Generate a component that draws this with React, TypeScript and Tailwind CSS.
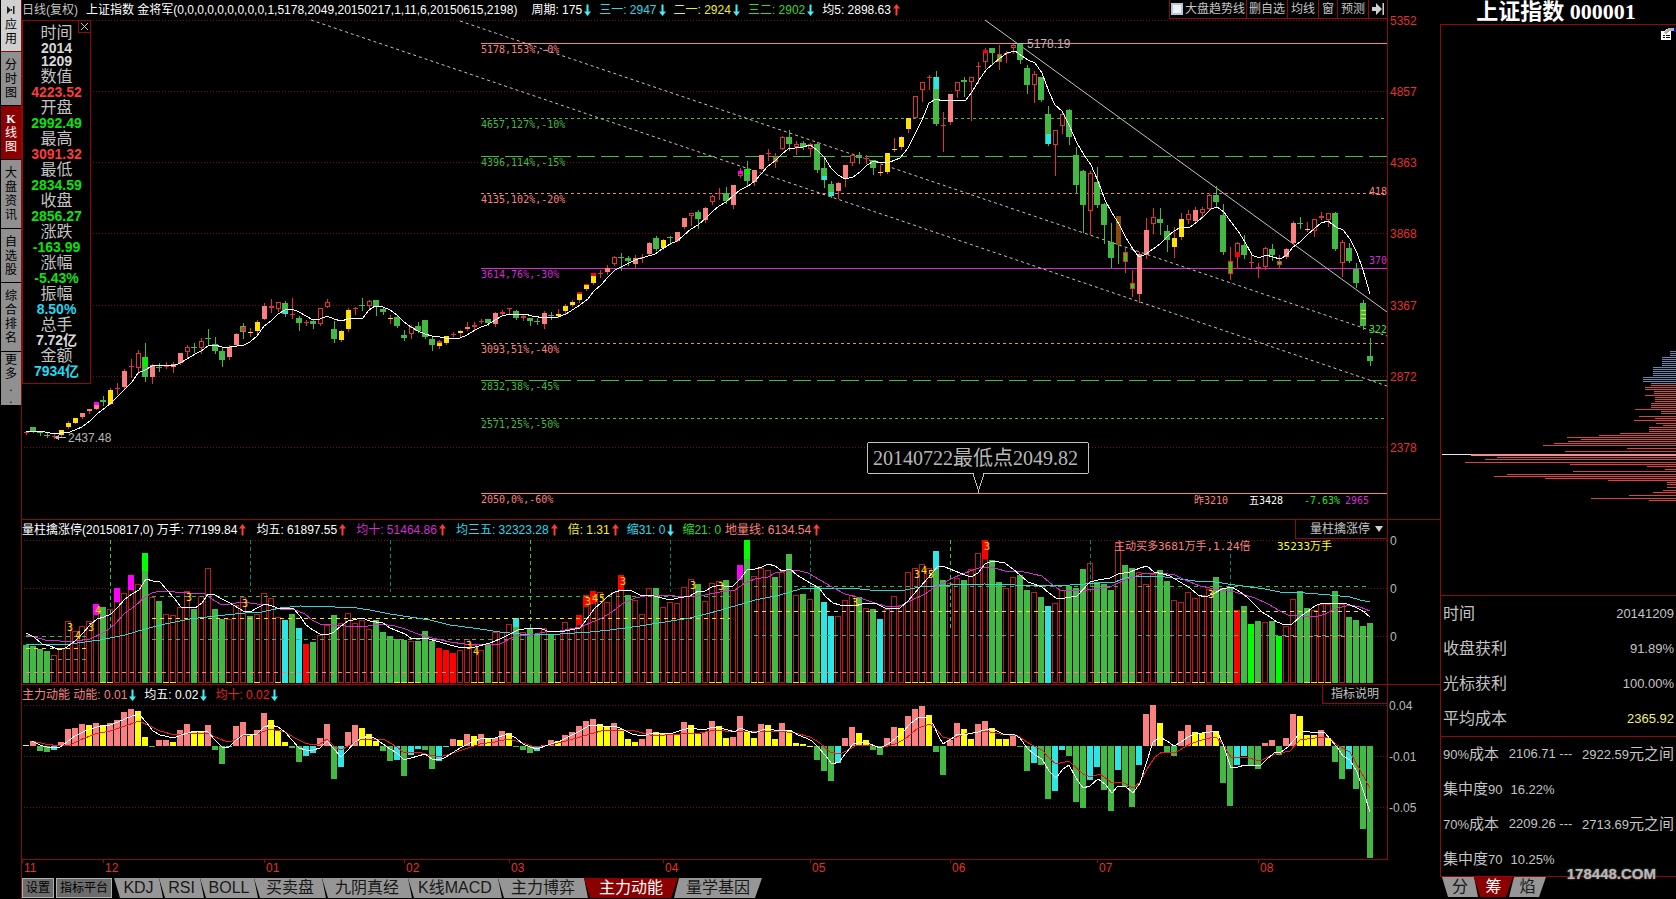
import { useState } from "react";

const RED = "#e03232";
const DARK_RED = "#8c0a0a";
const GREEN = "#42b942";
const PINK = "#fa8080";
const YELLOW = "#ffe100";
const CYAN = "#2ce6e6";
const MAGENTA = "#d22cd2";
const LIME = "#00f000";

/** First bar sits at x = 26, then one bar every 7 units. */
const barX = (i: number) => 26 + 7 * i;

// kind high top bottom low
const CANDLES = `
r431,432,433,434 g427,427,432,432 g431,432,433,435 g433,435,436,437 r434,436,437,438 y430,430,435,436 y421,423,427,428 y418,418,423,423
p413,413,417,418 p409,409,411,413 p402,402,409,409 g396,400,402,405 y388,390,404,404 m383,388,389,394 p369,371,387,388 m359,366,367,377
r350,353,368,373 g343,357,377,381 p364,365,377,383 g363,367,368,371 r362,366,367,368 p362,364,367,372 p353,353,363,364 r345,347,352,357
g343,347,348,352 r338,341,348,353 g329,338,339,344 g337,344,351,353 g348,351,360,366 p345,347,357,359 p333,334,345,346 g323,326,332,338
y328,332,333,336 y320,322,331,333 p303,306,319,319 r299,306,308,312 r302,302,309,311 g301,303,314,316 r298,314,315,318 g316,318,323,330
r320,322,323,325 g319,321,324,328 r308,308,324,325 r299,302,307,307 g321,329,339,342 y330,331,340,341 y308,310,329,331 r307,308,309,314
g298,305,306,310 r300,301,306,310 g300,300,306,315 g307,309,312,314 y315,318,319,323 g315,317,326,327 g330,335,338,340 r325,327,334,338
g322,326,331,332 g320,320,337,338 g337,339,345,350 y340,342,346,348 y336,336,343,344 r332,334,335,336 y330,331,333,336 p322,327,329,330
r322,325,327,329 r319,321,322,323 g319,319,323,325 p312,313,324,326 r310,312,314,314 r308,308,309,313 g310,311,318,319 r314,316,318,320
g318,318,321,325 g318,321,322,324 p311,313,324,328 g312,315,316,319 y309,314,316,317 y304,306,311,313 y300,302,305,306 y292,292,300,302
y284,284,289,290 y273,273,283,284 r270,273,274,277 p265,268,272,274 r256,257,264,265 g253,257,258,270 g256,258,261,265 p255,258,264,268
r254,257,258,262 p242,243,254,254 g236,238,249,250 y239,240,248,249 g236,237,238,244 p232,232,241,241 p218,218,227,228 r213,213,216,225
g210,212,219,228 p207,208,220,222 r195,196,202,204 r188,193,194,199 g187,193,201,203 p185,185,205,208 r168,171,176,177 g161,169,181,186
p170,170,182,185 p155,155,169,169 r149,153,154,160 l153,157,162,167 r136,137,149,149 g130,137,144,150 r141,144,147,154 g141,143,147,149
r143,144,149,156 g142,144,170,172 g157,168,180,187 g181,184,196,197 p182,183,191,198 p165,165,179,186 r153,155,163,165 g152,155,158,163
r155,158,159,163 g160,160,168,174 y165,172,173,175 y153,153,172,173 y138,149,150,151 y136,137,147,149 y118,118,129,132 r96,96,118,118
r82,82,90,101 r75,77,78,89 g71,77,124,125 r112,125,126,151 p94,94,122,124 r82,82,91,97 g77,80,82,96 r77,77,82,120
r62,66,67,83 r48,50,62,68 g48,48,53,64 l45,54,62,69 r51,53,54,62 r43,45,48,53 g43,44,60,63 g65,68,85,93
r71,74,85,102 g77,77,100,101 g106,114,144,145 r130,130,145,175 r112,114,126,133 g109,110,137,144 g147,155,185,193 g170,171,205,232
r171,173,211,234 g167,182,205,207 g203,204,225,243 g223,242,258,267 b216,216,245,263 l248,252,262,272 l270,283,289,296 p252,254,294,302
p218,230,255,258 r208,217,224,233 g208,219,223,234 g225,231,240,251 y227,238,247,257 y213,219,237,239 r210,214,220,223 p207,210,221,223
r207,209,213,216 r193,195,209,209 g186,195,202,206 g204,215,252,254 l247,261,274,279 r242,243,257,268 g235,245,255,258 r252,262,263,267
r263,267,268,277 r247,248,267,269 g244,249,255,260 l255,261,265,268 p248,249,257,258 p221,223,243,244 g217,223,224,228 y222,229,230,231
r219,219,231,236 r212,216,218,219 r213,213,220,226 g212,213,249,250 r240,242,263,276 g243,248,261,262 g263,269,283,287 g300,303,326,329
g338,356,361,365
`
  .trim()
  .split(/\s+/)
  .map((t) => ({ kind: t[0], v: t.slice(1).split(",").map(Number) }));

// bar index, top, height, colour
const CANDLE_ACCENTS: [number, number, number, string][] = [
  [10, 402, 3, "#ff00ff"], [17, 357, 9, LIME], [31, 327, 4, RED], [37, 311, 3, CYAN], [59, 341, 2, RED],
  [79, 292, 2, "#ff0000"], [80, 284, 1, "#ff0000"], [81, 273, 3, "#ff0000"], [102, 171, 3, "#ff00ff"], [103, 169, 5, LIME],
  [114, 176, 4, CYAN], [115, 192, 4, CYAN], [130, 77, 12, CYAN], [137, 50, 3, "#ff0000"], [146, 134, 10, CYAN],
  [173, 252, 5, "#ff0000"], [191, 310, 1, YELLOW], [191, 314, 1, YELLOW], [191, 318, 1, YELLOW],
];

const PRICE_MA =
  "26,431 40,431 50,433 60,433 70,432 82,427 90,421 97,414 105,408 112,402 118,396 125,389 132,382 138,373 145,370 152,366 160,365 173,366 180,363 187,359 195,354 201,351 208,346 215,345 222,347 230,347 237,346 244,345 250,342 257,336 264,326 271,321 278,314 285,310 292,309 299,312 306,316 313,320 320,319 327,316 334,319 341,321 348,319 355,318 362,319 369,310 375,306 383,307 390,310 397,315 404,322 411,327 418,331 425,334 432,336 440,337 450,339 460,338 467,335 475,330 481,327 487,325 495,320 502,316 510,314 525,314 532,316 545,318 558,317 566,314 580,305 588,299 594,291 602,284 608,277 615,270 625,265 635,260 645,257 655,254 662,249 670,244 677,241 683,236 691,229 698,225 705,219 712,212 719,206 726,202 733,196 740,190 748,186 755,181 761,174 768,166 775,161 781,155 788,149 795,148 803,147 810,145 817,150 824,157 831,168 838,175 845,179 853,177 860,172 867,165 874,161 881,163 890,162 900,158 908,148 916,132 922,120 929,103 936,99 943,101 951,100 958,100 965,101 972,92 979,80 986,70 993,64 1000,58 1007,53 1015,51 1022,56 1028,60 1035,63 1042,73 1049,92 1055,105 1062,111 1069,125 1077,143 1084,155 1091,165 1098,181 1105,200 1112,213 1119,224 1126,238 1133,249 1139,257 1146,254 1153,249 1160,244 1167,237 1174,231 1181,227 1190,227 1197,222 1204,216 1211,209 1217,207 1224,212 1231,222 1238,231 1245,242 1252,255 1259,258 1266,255 1273,257 1280,259 1287,255 1293,247 1300,242 1307,235 1314,229 1321,223 1328,221 1336,227 1343,230 1350,239 1357,253 1363,270 1370,294";

const LEVELS = [
  { y: 43, label: "5178,153%,-0%", color: PINK, dash: "" },
  { y: 118, label: "4657,127%,-10%", color: GREEN, dash: "3 3" },
  { y: 156, label: "4396,114%,-15%", color: GREEN, dash: "18 6" },
  { y: 193, label: "4135,102%,-20%", color: PINK, dash: "3 3" },
  { y: 268, label: "3614,76%,-30%", color: MAGENTA, dash: "" },
  { y: 343, label: "3093,51%,-40%", color: PINK, dash: "3 3" },
  { y: 380, label: "2832,38%,-45%", color: GREEN, dash: "18 6" },
  { y: 418, label: "2571,25%,-50%", color: GREEN, dash: "3 3" },
  { y: 493, label: "2050,0%,-60%", color: PINK, dash: "" },
];

const PRICE_AXIS: [number, string][] = [
  [20, "5352"], [91, "4857"], [162, "4363"], [233, "3868"], [305, "3367"], [376, "2872"], [447, "2378"],
];

const VOLUMES = `
g645 g646 g649 g651 r655 r648 r621 r631 r626 r621 r604 g607 r609 r588 r593 r575 r584 g553 r597 g601 r614 r615 r607 r591 g609
r596 r568 g609 g619 r619 r605 r597 g616 r614 r593 r598 r617 c620 g614 c628 R644 g642 r635 r625 g615 r623 r613 r623 r620 r629
g620 g632 g636 g639 g640 r641 g641 g631 g641 R648 R650 R653 r650 r639 r645 r650 g644 r632 r632 r624 g618 r632 g629 g634 r628
g634 r634 r622 r628 r615 r595 r591 r592 r602 r592 r575 g595 r600 r614 r588 g588 r607 r602 r603 r587 r579 g584 r601 r583 r581
g580 r590 r565 g540 r576 r568 r570 g577 r572 g554 r595 g594 r599 g586 c602 c616 r616 r600 r595 g597 r608 g609 c619 r609 r596
r605 r572 r568 r564 r568 g551 g580 r583 r578 g580 r569 r553 r540 g560 g582 r588 r577 g575 g590 r592 g597 c606 r603 r590 g586
g588 g569 r563 g582 g584 g590 r543 g565 g568 r572 r584 r574 g570 g581 r600 r602 r592 r598 r595 r589 g577 g588 g588 R610 g606
l624 g621 r622 g621 l636 r626 r599 g591 g608 r610 r604 r604 g591 r604 g617 g620 g626 g623
`
  .trim()
  .split(/\s+/)
  .map((t) => ({ kind: t[0], y: Number(t.slice(1)) }));

const VOLUME_ACCENTS: [number, number, number, string][] = [
  [10, 604, 11, "#ff00ff"], [13, 588, 14, "#ff00ff"], [15, 575, 15, "#ff00ff"], [17, 553, 18, "#00ff00"], [70, 618, 9, CYAN],
  [79, 615, 10, "#ff0000"], [80, 595, 12, "#ff0000"], [81, 591, 13, "#ff0000"], [85, 575, 15, "#ff0000"], [102, 565, 15, "#ff00ff"],
  [103, 540, 19, "#00ff00"], [130, 551, 18, CYAN], [137, 540, 19, "#ff0000"],
];

const YELLOW_FEET = [
  11, 12, 20, 21, 29, 33, 36, 53, 54, 55, 56, 64, 65, 67, 68, 75, 76, 81, 82, 83, 84, 89, 92, 93, 98, 99, 104, 105, 110, 111,
  119, 126, 127, 128, 129, 131, 132, 133, 134, 141, 142, 143, 153, 154, 157, 158, 159, 164, 165, 167, 168, 171, 172, 176, 183, 184, 185, 186,
];

const VOLUME_MARKS: [number, number, string][] = [
  [70, 627, "3"], [78, 635, "4"], [91, 627, "3"], [98, 610, "4"], [189, 597, "3"], [245, 603, "3"], [469, 645, "3"], [476, 651, "4"],
  [588, 601, "3"], [595, 598, "4"], [602, 598, "5"], [623, 581, "3"], [693, 585, "3"], [721, 586, "3"], [855, 602, "3"], [917, 574, "3"],
  [924, 570, "4"], [931, 574, "5"], [987, 546, "3"], [1211, 594, "3"],
];

const VOLUME_MA5 =
  "26,633 34,637 42,644 50,646 60,650 67,647 75,641 83,633 90,625 97,619 104,617 111,614 118,607 125,599 132,594 139,590 146,579 153,581 160,582 167,590 174,598 181,607 195,608 202,603 208,594 215,595 222,599 230,603 243,611 250,612 257,608 265,604 272,606 280,609 293,608 300,616 306,625 313,630 320,634 327,635 334,632 341,626 348,621 362,618 370,621 383,623 390,628 405,634 412,639 425,638 440,642 450,645 462,648 475,647 490,643 500,639 510,634 518,630 530,628 542,629 550,632 565,631 580,628 587,619 594,609 602,602 608,596 615,592 622,590 632,591 640,595 650,595 658,597 670,600 678,598 690,596 698,591 705,591 712,587 720,585 728,587 733,586 740,579 747,570 755,569 762,567 768,564 775,566 782,571 790,569 797,575 805,580 812,584 819,588 826,597 833,603 840,605 855,606 862,604 875,603 885,608 900,608 908,601 914,594 920,587 928,578 938,566 945,567 955,571 965,575 971,577 978,573 985,564 992,561 1005,563 1013,569 1020,575 1028,582 1042,587 1049,593 1056,598 1065,598 1077,596 1090,582 1098,580 1110,578 1118,574 1130,572 1140,568 1147,566 1154,572 1163,574 1170,576 1180,582 1190,588 1198,595 1205,597 1213,594 1222,589 1232,587 1240,592 1247,597 1255,605 1262,612 1270,617 1277,622 1285,625 1292,624 1300,617 1308,611 1315,606 1322,603 1335,603 1347,604 1355,607 1363,611 1370,617";
const VOLUME_MA10 =
  "26,635 35,637 45,640 60,641 75,641 90,639 105,632 115,624 125,613 135,606 145,597 152,593 160,591 175,592 190,593 205,594 212,599 220,604 230,604 243,602 257,604 265,604 272,606 280,609 293,609 305,614 312,620 320,624 345,626 362,627 380,624 395,626 405,629 418,634 432,638 450,642 465,644 500,644 515,636 530,635 545,632 560,631 580,627 590,623 602,618 612,612 622,604 635,598 650,595 665,595 675,596 690,597 705,595 720,592 735,590 745,583 755,579 768,577 775,573 790,570 800,571 808,573 820,580 832,587 845,594 860,598 875,603 888,607 900,606 912,600 925,594 935,587 945,582 955,577 970,571 982,567 995,568 1008,572 1020,571 1033,574 1042,576 1050,583 1060,590 1080,591 1095,589 1110,587 1120,582 1130,578 1142,574 1160,573 1175,575 1185,580 1200,586 1215,589 1235,592 1245,595 1255,598 1268,604 1280,611 1288,615 1300,616 1315,617 1325,614 1338,608 1350,605 1360,607 1370,611";
const VOLUME_MA35 =
  "26,644 45,645 70,644 100,640 125,635 145,629 165,624 190,619 215,616 245,613 262,612 280,608 300,606 335,607 350,607 370,610 390,614 410,617 430,620 450,625 480,629 500,632 520,634 560,634 590,632 610,630 640,626 665,622 690,618 710,613 735,606 755,600 780,595 800,589 820,588 850,588 870,590 905,590 920,587 950,585 985,584 1015,585 1045,586 1070,585 1100,583 1115,582 1125,578 1145,576 1165,577 1195,581 1215,582 1235,585 1265,589 1280,592 1305,593 1330,595 1350,597 1360,600 1370,602";

// x1, x2, y, colour
const VOLUME_LEVELS: [number, number, number, string][] = [
  [26, 90, 636, GREEN], [26, 90, 648, YELLOW], [50, 90, 659, GREEN],
  [152, 730, 596, GREEN], [152, 730, 618, YELLOW], [152, 730, 639, GREEN],
  [754, 1370, 586, GREEN], [754, 1370, 611, YELLOW], [754, 1370, 635, GREEN],
  [26, 1240, 672, PINK], [1285, 1370, 636, PINK],
];

const MOMENTUM = `
y745 p741 g751 g752 c750 p742 p729 p728 p724 y725 p723 y725 p723 p720 p712 p709 y711 y737 g747 p740 p740 y742 p730 p724 y731
y731 p725 g750 g764 c747 p726 p722 y735 p730 p713 y720 y730 y742 g748 g762 c756 c753 p738 p724 g779 c767 p732 p725 y728 y734
y741 g751 g761 c760 g776 c755 c749 g750 g769 c761 c747 p739 y740 p734 y736 p734 y739 p738 p731 y733 g747 g750 g753 c751 p745
p740 y741 p735 p732 p726 p721 p719 y724 y727 p723 y729 y739 y742 p739 p729 y732 y734 p734 y734 p722 y725 y734 p732 p721 y726
y738 p737 p716 y732 y738 p724 y725 y739 p723 y731 y743 y744 y747 g760 g771 g781 c763 p738 p727 y733 y740 g750 g755 p738 p727
y728 p716 p709 p706 y715 g752 g775 p740 p723 y729 y739 p724 p721 y728 y739 y739 p735 g747 g771 c763 g765 g799 c791 c750 g756
g802 g808 c780 c767 g790 g811 c770 g787 g807 c765 p714 p705 y723 g752 g756 p731 p725 y732 y733 p725 y731 g783 g806 c765 c756
g766 g769 p743 p740 g755 p738 p714 y716 y735 y735 p730 y738 g762 g779 c769 g789 g829 g858
`
  .trim()
  .split(/\s+/)
  .map((t) => ({ kind: t[0], y: Number(t.slice(1)) }));

const MOMENTUM_MA5 =
  "32,741 40,745 50,748 60,747 67,742 75,736 85,731 97,727 110,725 118,722 125,719 132,716 139,714 146,722 153,731 160,735 174,738 181,735 195,731 208,732 215,740 222,747 229,747 236,740 243,735 257,734 264,727 271,725 278,727 285,732 292,740 299,748 306,750 313,750 320,748 327,741 334,749 341,757 348,750 355,742 362,738 369,736 376,739 383,744 390,749 397,753 404,760 411,758 418,756 425,754 432,759 439,760 446,757 460,748 470,743 480,739 495,738 508,734 516,738 523,744 530,747 537,749 548,745 560,741 570,736 580,731 590,725 598,725 608,727 615,726 622,729 632,734 642,736 653,733 665,734 673,733 682,730 690,728 697,729 705,730 712,727 720,728 728,730 735,732 740,728 748,731 755,733 762,730 770,729 778,731 790,730 798,735 806,738 812,741 818,747 825,755 832,764 839,762 846,753 853,744 862,742 870,744 880,748 888,744 895,739 904,731 910,724 918,718 926,717 933,724 939,737 943,744 951,739 958,734 968,734 978,732 988,729 995,730 1003,734 1015,735 1020,738 1027,748 1035,755 1042,759 1049,771 1056,778 1063,769 1069,765 1076,778 1083,788 1090,786 1098,779 1105,784 1112,793 1118,786 1125,786 1133,793 1140,783 1146,764 1153,742 1160,737 1167,741 1174,746 1181,742 1188,737 1195,734 1210,732 1217,731 1223,744 1231,768 1238,767 1245,765 1260,766 1266,760 1274,753 1281,752 1288,747 1294,740 1302,731 1310,732 1325,733 1330,739 1337,747 1343,756 1350,760 1357,772 1364,793 1370,812";
const MOMENTUM_MA10 =
  "32,741 45,744 60,746 70,745 80,740 95,734 110,731 125,726 139,721 150,726 160,731 175,735 190,733 208,733 215,737 225,741 232,741 243,736 257,734 270,729 285,732 295,738 305,743 313,745 320,744 327,739 334,746 341,750 350,745 360,740 370,739 385,740 397,747 404,753 418,752 430,755 440,757 450,754 465,749 480,744 495,742 508,739 520,742 535,747 550,745 570,740 590,734 605,730 620,730 635,731 650,735 665,735 680,734 700,733 715,730 735,732 745,731 760,731 778,731 795,733 810,737 820,743 830,752 839,754 847,751 857,745 870,745 880,748 895,744 905,739 918,728 930,724 936,729 943,737 951,739 965,734 985,731 1000,734 1018,736 1030,744 1042,750 1049,758 1056,764 1069,761 1083,774 1090,777 1100,774 1112,783 1122,782 1133,788 1140,782 1147,769 1155,757 1162,752 1175,753 1190,744 1205,739 1216,737 1223,745 1231,757 1245,757 1260,761 1275,754 1290,751 1300,740 1315,738 1328,737 1337,745 1350,752 1360,770 1370,788";

// y, left edge
const CHIPS_ABOVE: [number, number][] = [
  [351, 1670], [353, 1670], [355, 1670], [357, 1662], [359, 1662], [361, 1662], [363, 1662], [365, 1662], [367, 1653],
  [369, 1653], [371, 1653], [373, 1653], [375, 1653], [377, 1643], [379, 1643], [381, 1643], [383, 1651],
];
const CHIPS_BELOW: [number, number][] = [
  [385, 1651], [387, 1645], [389, 1645], [391, 1654], [393, 1654], [395, 1645], [397, 1655], [399, 1655], [401, 1655], [403, 1651],
  [405, 1651], [407, 1651], [409, 1635], [411, 1661], [413, 1661], [416, 1639], [418, 1655], [420, 1634], [423, 1656], [425, 1663],
  [427, 1649], [429, 1649], [431, 1649], [433, 1620], [435, 1599], [437, 1567], [439, 1581], [441, 1568], [443, 1554], [445, 1543],
  [448, 1627], [451, 1565], [457, 1497], [459, 1485], [462, 1465], [464, 1570], [466, 1647], [469, 1665], [471, 1573], [474, 1507],
  [476, 1494], [478, 1545], [480, 1608], [482, 1667], [484, 1667], [487, 1667], [490, 1663], [492, 1653], [495, 1629], [498, 1591], [500, 1649],
];

const MONTHS: [number, string][] = [
  [22, "11"], [103, "12"], [264, "01"], [404, "02"], [509, "03"], [663, "04"], [810, "05"], [950, "06"], [1097, "07"], [1258, "08"],
];

const SIDE_TABS = [
  { label: "应用", cls: "h-[52px] bg-[#d0d0d0] border-[#8c0a0a]" },
  { label: "分时图", cls: "h-[54px] bg-[#909090] border-black" },
  { label: "K线图", cls: "h-[54px] bg-[#8b0000] border-black text-white" },
  { label: "大盘资讯", cls: "h-[69px] bg-[#909090] border-black" },
  { label: "自选股", cls: "h-[54px] bg-[#909090] border-black" },
  { label: "综合排名", cls: "h-[69px] bg-[#909090] border-black" },
  { label: "更多..", cls: "h-[54px] bg-[#909090] border-black" },
];

const QUOTE = [
  { label: "数值", value: "4223.52", cls: "text-[#ff3a3a]" },
  { label: "开盘", value: "2992.49", cls: "text-[#10e010]" },
  { label: "最高", value: "3091.32", cls: "text-[#ff3a3a]" },
  { label: "最低", value: "2834.59", cls: "text-[#10e010]" },
  { label: "收盘", value: "2856.27", cls: "text-[#10e010]" },
  { label: "涨跌", value: "-163.99", cls: "text-[#10e010]" },
  { label: "涨幅", value: "-5.43%", cls: "text-[#10e010]" },
  { label: "振幅", value: "8.50%", cls: "text-[#22d8f0]" },
  { label: "总手", value: "7.72亿", cls: "text-[#d8d8d8]" },
  { label: "金额", value: "7934亿", cls: "text-[#22d8f0]" },
];

const INDICATOR_TABS = [
  { label: "KDJ", width: "w-[49px]" },
  { label: "RSI", width: "w-[45px]" },
  { label: "BOLL", width: "w-[58px]" },
  { label: "买卖盘", width: "w-[72px]" },
  { label: "九阴真经", width: "w-[90px]" },
  { label: "K线MACD", width: "w-[94px]" },
  { label: "主力博弈", width: "w-[90px]" },
  { label: "主力动能", width: "w-[94px]" },
  { label: "量学基因", width: "w-[88px]" },
];

const CHIP_TABS = [
  { label: "分", width: "w-[36px]" },
  { label: "筹", width: "w-[39px]" },
  { label: "焰", width: "w-[37px]" },
];

const FILLS: Record<string, string> = {
  g: GREEN,
  p: PINK,
  y: YELLOW,
  c: CYAN,
  m: "#e020a0",
  R: "#ff0000",
  l: "#00ff00",
  b: "#8a4a08",
};

const Arrow = ({ up }: { up?: boolean }) => (
  <svg viewBox="0 0 7 12" width="7" height="12" className="ml-0.5 shrink-0" fill={up ? "#ff3c32" : "#40f0ff"}>
    {up ? <path d="M3.5 0 7 4.500H4.500V11.500H2.500V4.500H0z" /> : <path d="M3.500 12 0 7.500H2.500V0.500H4.500V7.500H7z" />}
  </svg>
);

interface GridProps {
  ys: number[];
  top: number;
  bottom: number;
}

const Grid = ({ ys, top, bottom }: GridProps) => (
  <>
    {ys.map((y) => (
      <line key={y} x1="24" x2="1387" y1={y + 0.5} y2={y + 0.5} stroke="#780a0a" strokeDasharray="1 2" />
    ))}
    <line x1="1387.5" x2="1387.5" y1={top} y2={bottom} stroke={DARK_RED} />
  </>
);

interface TabStripProps {
  tabs: { label: string; width: string }[];
  initial: string;
}

function TabStrip({ tabs, initial }: TabStripProps) {
  const [active, setActive] = useState(initial);
  const activeIndex = tabs.findIndex((t) => t.label === active);

  return (
    <div role="tablist" className="flex -space-x-1">
      {tabs.map((t, i) => {
        const shape =
          i < activeIndex
            ? "bg-[#969696] text-[#181818] [clip-path:polygon(0_0,calc(100%-4px)_0,100%_100%,6px_100%)]"
            : i === activeIndex
              ? "bg-[#8b0000] text-white [clip-path:polygon(0_0,100%_0,calc(100%-7px)_100%,6px_100%)]"
              : "bg-[#969696] text-[#181818] [clip-path:polygon(5px_0,100%_0,calc(100%-7px)_100%,0_100%)]";
        return (
          <button
            key={t.label}
            type="button"
            role="tab"
            aria-selected={i === activeIndex}
            onClick={() => setActive(t.label)}
            className={`h-5 shrink-0 cursor-pointer whitespace-nowrap text-center text-base leading-5 ${t.width} ${shape}`}
          >
            {t.label}
          </button>
        );
      })}
    </div>
  );
}

function PriceChart() {
  return (
    <svg viewBox="22 20 1418 499" className="block w-full overflow-visible text-xs" shapeRendering="crispEdges">
      <Grid ys={PRICE_AXIS.map(([y]) => y)} top={20} bottom={519} />
      {PRICE_AXIS.map(([y, t]) => (
        <text key={t} x="1390" y={y + 5} fill={RED}>
          {t}
        </text>
      ))}

      <g className="font-['DejaVu_Sans_Mono','Noto_Sans_CJK_SC',monospace] text-[10px]">
        {LEVELS.map((l) => (
          <g key={l.y}>
            <line x1="481" x2="1387" y1={l.y + 0.5} y2={l.y + 0.5} stroke={l.color} strokeDasharray={l.dash} />
            <text x="481" y={l.y + 10} fill={l.color}>
              {l.label}
            </text>
          </g>
        ))}
      </g>

      <g stroke="#c4c4c4" fill="none" shapeRendering="auto">
        <path d="M985 20 1387 312" />
        <path d="M460 21 1387 336M311 20 1387 386" strokeDasharray="3 3" />
      </g>

      {CANDLES.map(({ kind, v: [high, top, bottom, low] }, i) => {
        const x = barX(i);
        const hollow = kind === "r" || kind === "l";
        const wick = kind === "g" || kind === "b" ? GREEN : RED;
        const flat = bottom - top < 2;
        return (
          <g key={i}>
            <rect x={x} y={high} width="1" height={low - high + 1} fill={wick} />
            {hollow && !flat ? (
              <rect
                x={x - 1.5}
                y={top + 0.5}
                width="4"
                height={bottom - top - 1}
                fill={kind === "l" ? "#30d010" : "#000"}
                stroke={RED}
              />
            ) : (
              <rect
                x={kind === "g" ? x - 3 : x - 2}
                y={top}
                width={kind === "g" ? 6 : 5}
                height={bottom - top}
                fill={kind === "r" ? RED : FILLS[kind]}
              />
            )}
          </g>
        );
      })}
      {CANDLE_ACCENTS.map(([i, y, h, color]) => (
        <rect key={`${i}-${y}`} x={barX(i) - 2} y={y} width="5" height={h} fill={color} />
      ))}

      <polyline points={PRICE_MA} fill="none" stroke="#fff" />

      <path d="M66 437.500H56" stroke="#b8b8b8" />
      <path d="M59 434.500 54.500 437.500 59 440.500z" fill="#b8b8b8" />
      <text x="68" y="442" fill="#b8b8b8">
        2437.48
      </text>
      <path d="M1024 43.500H1013" stroke="#b8b8b8" />
      <text x="1027" y="48" fill="#c0b0b8">
        5178.19
      </text>

      <path
        d="M869.500 442.500H1086.500a2 2 0 0 1 2 2V471.500a2 2 0 0 1-2 2H984L978.500 491 973 473.500H869.500a2 2 0 0 1-2-2V444.500a2 2 0 0 1 2-2z"
        fill="#000"
        stroke="#c4c4c4"
      />
      <text x="873" y="465" fill="#b8b8b8" className="font-['Liberation_Serif','Noto_Sans_CJK_SC',serif] text-xl">
        20140722最低点2049.82
      </text>

      <g className="font-['DejaVu_Sans_Mono','Noto_Sans_CJK_SC',monospace] text-[10px]">
        <text x="1369" y="195" fill={PINK}>418</text>
        <text x="1369" y="264" fill={MAGENTA}>370</text>
        <text x="1369" y="333" fill="#40e040">322</text>
        <text x="1194" y="504" fill={PINK}>昨3210</text>
        <text x="1249" y="504" fill="#fff">五3428</text>
        <text x="1304" y="504" fill="#30e030">-7.63%</text>
        <text x="1345" y="504" fill={MAGENTA}>2965</text>
      </g>
    </svg>
  );
}

function VolumeChart() {
  return (
    <svg viewBox="22 540 1418 144" className="block w-full overflow-visible text-xs" shapeRendering="crispEdges">
      <Grid ys={[540, 588, 636]} top={540} bottom={684} />
      {[545, 593, 641].map((y) => (
        <text key={y} x="1390" y={y} fill="#b8b8b8">
          0
        </text>
      ))}

      {VOLUMES.map(({ kind, y }, i) =>
        kind === "r" ? (
          <rect key={i} x={barX(i) - 2.5} y={y + 0.5} width="5" height={682 - y} fill="#000" stroke="#c01818" />
        ) : (
          <rect key={i} x={barX(i) - 3} y={y} width="6" height={683 - y} fill={FILLS[kind]} />
        ),
      )}
      {VOLUME_ACCENTS.map(([i, y, h, color]) => (
        <rect key={i} x={barX(i) - 3} y={y} width="6" height={h} fill={color} />
      ))}
      {YELLOW_FEET.map((i) => (
        <rect key={i} x={barX(i) - 3} y="682" width="6" height="1" fill={YELLOW} />
      ))}

      {[110, 250, 390, 530, 670, 810, 950, 1090, 1230].map((x, i) => (
        <line
          key={x}
          x1={x + 0.5}
          x2={x + 0.5}
          y1="540"
          y2={i % 3 === 0 ? 628 : 592}
          stroke={i % 3 === 0 ? "#40c040" : "#108070"}
          strokeDasharray="4 3"
        />
      ))}
      {VOLUME_LEVELS.map(([x1, x2, y, color]) => (
        <line key={`${x1}-${y}`} x1={x1} x2={x2} y1={y + 0.5} y2={y + 0.5} stroke={color} strokeDasharray="4 4" />
      ))}

      <polyline points={VOLUME_MA35} fill="none" stroke="#28d8d8" />
      <polyline points={VOLUME_MA10} fill="none" stroke={MAGENTA} />
      <polyline points={VOLUME_MA5} fill="none" stroke="#fff" />

      <g className="font-['DejaVu_Sans_Mono','Noto_Sans_CJK_SC',monospace] text-[10px]" fill={YELLOW}>
        {VOLUME_MARKS.map(([x, y, t]) => (
          <text key={x} x={x - 3} y={y + 4}>
            {t}
          </text>
        ))}
      </g>
      <g className="font-['DejaVu_Sans_Mono','Noto_Sans_CJK_SC',monospace] text-[11px]">
        <text x="1114" y="550" fill={PINK}>主动买多3681万手,1.24倍</text>
        <text x="1277" y="550" fill="#ffff00">35233万手</text>
      </g>
    </svg>
  );
}

function MomentumChart() {
  return (
    <svg viewBox="22 705 1418 154" className="block w-full overflow-visible text-xs" shapeRendering="crispEdges">
      <Grid ys={[705, 756, 807]} top={705} bottom={860} />
      <g fill="#b8b8b8">
        <text x="1389" y="710">0.04</text>
        <text x="1389" y="761">-0.01</text>
        <text x="1389" y="812">-0.05</text>
      </g>
      {MOMENTUM.map(({ kind, y }, i) => (
        <rect
          key={i}
          x={barX(i) - 3}
          y={Math.min(y, 746)}
          width="6"
          height={Math.abs(746 - y)}
          fill={kind === "y" ? "#ffff00" : FILLS[kind]}
        />
      ))}
      <polyline points={MOMENTUM_MA10} fill="none" stroke="#f01818" />
      <polyline points={MOMENTUM_MA5} fill="none" stroke="#fff" />
    </svg>
  );
}

function ChipChart() {
  return (
    <svg viewBox="1441 25 235 570" className="block w-full" shapeRendering="crispEdges">
      {CHIPS_ABOVE.map(([y, x]) => (
        <rect key={y} x={x} y={y} width={1676 - x} height="1" fill="#4a90b8" />
      ))}
      {CHIPS_BELOW.map(([y, x]) => (
        <rect key={y} x={x} y={y} width={1676 - x} height="1" fill="#d84444" />
      ))}
      <rect x="1442" y="454" width="234" height="1" fill="#e8e8e8" />
      <rect x="1471" y="454" width="205" height="2" fill="#f09090" />
      <path d="M1661 31h3l2-2h5v11h-10z" fill="#fff" />
      <path d="M1663 35.500h2M1666 35.500h4M1663 37.500h2M1666 37.500h4" stroke="#000" />
      <path d="M1663 33 1668 28h6v3h-5l-3 3z" fill="#b0b0b0" />
      <rect x="1674" y="28" width="2" height="4" fill="#1010a0" />
    </svg>
  );
}

export default function App() {
  return (
    <div className="flex min-h-screen bg-black font-['Liberation_Sans','Noto_Sans_CJK_SC',sans-serif] text-xs text-[#c4c4c4]">
      <nav className="flex w-[21px] shrink-0 flex-col pl-px">
        {SIDE_TABS.map((t) => (
          <button
            key={t.label}
            type="button"
            className={`flex shrink-0 cursor-pointer flex-col items-center justify-center border-b text-xs leading-[14px] text-black ${t.cls}`}
          >
            {t.label === "应用" && (
              <svg viewBox="0 0 8 8" width="8" height="8" className="mb-1">
                <path d="M0 0 4 4 0 8zM4 3h1v2H4zM6 0h1.500v8H6z" fill="#202020" />
              </svg>
            )}
            {[...t.label].map((ch, i) => (
              <span key={i} className={ch === "K" ? "font-['Liberation_Serif',serif] font-bold" : ch === "." ? "leading-[12px]" : ""}>
                {ch}
              </span>
            ))}
          </button>
        ))}
      </nav>

      <main className="flex min-w-0 flex-1 flex-col border-l border-[#8c0a0a]">
        <div className="flex h-5 whitespace-nowrap">
          <div className="flex min-w-0 flex-1 items-center overflow-hidden">
            <span className="mr-2">日线(复权)</span>
            <span className="text-white">上证指数 金将军(0,0,0,0,0,0,0,0,0,1,5178,2049,20150217,1,11,6,20150615,2198)</span>
            <span className="ml-3.5 flex items-center text-white">周期: 175<Arrow /></span>
            <span className="ml-2 flex items-center text-[#2cd8e8]">三一: 2947<Arrow /></span>
            <span className="ml-2 flex items-center text-[#f0f020]">二一: 2924<Arrow /></span>
            <span className="ml-2 flex items-center text-[#30d830]">三二: 2902<Arrow /></span>
            <span className="ml-2 flex items-center text-white">均5: 2898.63<Arrow up /></span>
          </div>
          <div className="flex h-[19px] items-stretch border-b border-[#8c0a0a] [&>*]:border-l [&>*]:border-[#8c0a0a]">
            <label className="flex items-center gap-0.5 px-px">
              <input type="checkbox" className="h-3 w-3 appearance-none border-2 border-[#b8c8dc] bg-[#f0f0f0]" />
              大盘趋势线
            </label>
            <button type="button" className="cursor-pointer px-0.5">删自选</button>
            <button type="button" className="cursor-pointer px-[3px]">均线</button>
            <button type="button" className="cursor-pointer px-[3px]">窗</button>
            <button type="button" className="cursor-pointer px-[3px]">预测</button>
            <button type="button" aria-label="下一个" className="cursor-pointer px-[3px]">
              <svg viewBox="0 0 12 12" width="12" height="12" fill="#d0d0d0">
                <path d="M0 4h4V0l6 6-6 6V8H0zM10.500 0H12v12h-1.500z" />
              </svg>
            </button>
          </div>
          <div className="w-[53px] border-l border-[#8c0a0a]" />
        </div>

        <div className="relative">
          <PriceChart />
          <section className="absolute left-0 top-0 w-[69px] border border-[#8c0a0a] bg-black pb-1 pt-1 text-center">
            <button type="button" aria-label="关闭" className="absolute right-0 top-0 h-3 w-3 border-b border-l border-[#8c0a0a]">
              <svg viewBox="0 0 11 11" width="11" height="11" stroke="#c4c4c4">
                <path d="M2 2 9 9M9 2 2 9" />
              </svg>
            </button>
            <p className="text-base leading-4">时间</p>
            <p className="text-sm font-bold leading-[14px] text-[#d8d8d8]">2014</p>
            <p className="pb-0.5 text-sm font-bold leading-[12px] text-[#d8d8d8]">1209</p>
            {QUOTE.map((q) => (
              <div key={q.label} className="h-[31px]">
                <p className="text-base leading-4">{q.label}</p>
                <p className={`text-sm font-bold leading-[15px] ${q.cls}`}>{q.value}</p>
              </div>
            ))}
          </section>
        </div>

        <div className="flex h-[21px] whitespace-nowrap border-t border-[#8c0a0a]">
          <div className="flex min-w-0 flex-1 items-center overflow-hidden text-white">
            <span>量柱擒涨停(20150817,0) 万手: 77199.84</span>
            <Arrow up />
            <span className="ml-2.5">均五: 61897.55</span>
            <Arrow up />
            <span className="ml-2.5 text-[#d22cd2]">均十: 51464.86</span>
            <Arrow up />
            <span className="ml-2.5 text-[#2cd8e8]">均三五: 32323.28</span>
            <Arrow up />
            <span className="ml-2.5 text-[#f0f020]">倍: 1.31</span>
            <Arrow up />
            <span className="ml-2 text-[#2cd8e8]">缩31: 0</span>
            <Arrow />
            <span className="ml-2 text-[#30d830]">缩21: 0</span>
            <span className="ml-1 text-[#fa8080]">地量线: 6134.54</span>
            <Arrow up />
          </div>
          <div className="relative h-[19px] w-[92px] border-b border-l border-[#8c0a0a]">
            <select aria-label="指标" className="h-full w-full appearance-none bg-transparent pl-3.5">
              <option>量柱擒涨停</option>
            </select>
            <svg viewBox="0 0 8 6" width="8" height="6" className="pointer-events-none absolute right-1 top-1.5" fill="#d0d0d0">
              <path d="M0 0h8L4 6z" />
            </svg>
          </div>
          <div className="w-[53px] border-l border-[#8c0a0a]" />
        </div>
        <VolumeChart />

        <div className="flex h-[21px] whitespace-nowrap border-t border-[#8c0a0a]">
          <div className="flex min-w-0 flex-1 items-center text-[#fa8080]">
            <span>主力动能 动能: 0.01</span>
            <Arrow />
            <span className="ml-2 text-white">均五: 0.02</span>
            <Arrow />
            <span className="ml-2 text-[#f02020]">均十: 0.02</span>
            <Arrow />
          </div>
          <button type="button" className="h-[19px] cursor-pointer border-b border-l border-[#8c0a0a] px-2">
            指标说明
          </button>
          <div className="w-[53px] border-l border-[#8c0a0a]" />
        </div>
        <MomentumChart />

        <svg viewBox="22 859 1418 18" className="block w-full text-xs" shapeRendering="crispEdges">
          <path d="M22 859.500H1388" stroke={DARK_RED} />
          {MONTHS.map(([x, t]) => (
            <g key={t}>
              <path d={`M${x + 0.5} 860v3`} stroke={DARK_RED} />
              <text x={x + 2} y="872" fill={RED}>
                {t}
              </text>
            </g>
          ))}
        </svg>

        <div className="flex h-[22px] items-center gap-0.5">
          <button type="button" className="h-5 w-8 shrink-0 cursor-pointer border border-[#b0b0b0] bg-[#6c6c6c] text-black">
            设置
          </button>
          <button type="button" className="h-5 w-14 shrink-0 cursor-pointer border border-[#b0b0b0] bg-[#6c6c6c] text-black">
            指标平台
          </button>
          <TabStrip tabs={INDICATOR_TABS} initial="主力动能" />
        </div>
      </main>

      <aside className="flex w-[236px] shrink-0 flex-col">
        <h1 className="h-6 whitespace-nowrap pr-1 text-center font-['Liberation_Serif','Noto_Sans_CJK_SC',serif] text-[22px] font-bold leading-6 text-white">
          上证指数 000001
        </h1>
        <div className="border-l border-t border-[#8c0a0a]">
          <ChipChart />
        </div>
        <dl className="border-l border-t border-[#8c0a0a] px-0.5 text-base leading-[35px]">
          {[
            ["时间", "20141209", "text-[#c4c4c4]"],
            ["收盘获利", "91.89%", "text-[#c4c4c4]"],
            ["光标获利", "100.00%", "text-[#c4c4c4]"],
            ["平均成本", "2365.92", "text-[#f0f080]"],
          ].map(([label, value, cls]) => (
            <div key={label} className="flex h-[35px] justify-between">
              <dt>{label}</dt>
              <dd className={`text-[13px] ${cls}`}>{value}</dd>
            </div>
          ))}
        </dl>
        <div className="relative border-b border-l border-t border-[#8c0a0a] pl-0.5 text-[15px] leading-[34px] [&_span]:text-[13px]">
          <p className="flex h-[35px] justify-between whitespace-nowrap pr-0.5">
            <b className="font-normal"><span>90%</span>成本</b>
            <span>2106.71 ---</span>
            <b className="font-normal"><span>2922.59</span>元之间</b>
          </p>
          <p className="h-[35px]">集中度<span>90</span><span className="ml-2">16.22%</span></p>
          <p className="flex h-[35px] justify-between whitespace-nowrap pr-0.5">
            <b className="font-normal"><span>70%</span>成本</b>
            <span>2209.26 ---</span>
            <b className="font-normal"><span>2713.69</span>元之间</b>
          </p>
          <p className="h-[34px]">集中度<span>70</span><span className="ml-2">10.25%</span></p>
          <strong className="absolute -bottom-2 right-5 text-[15px] leading-5 text-[#b8b8b8] [text-shadow:0_0_2px_#808080]">
            178448.COM
          </strong>
        </div>
        <div className="pl-0.5">
          <TabStrip tabs={CHIP_TABS} initial="筹" />
        </div>
      </aside>
    </div>
  );
}
